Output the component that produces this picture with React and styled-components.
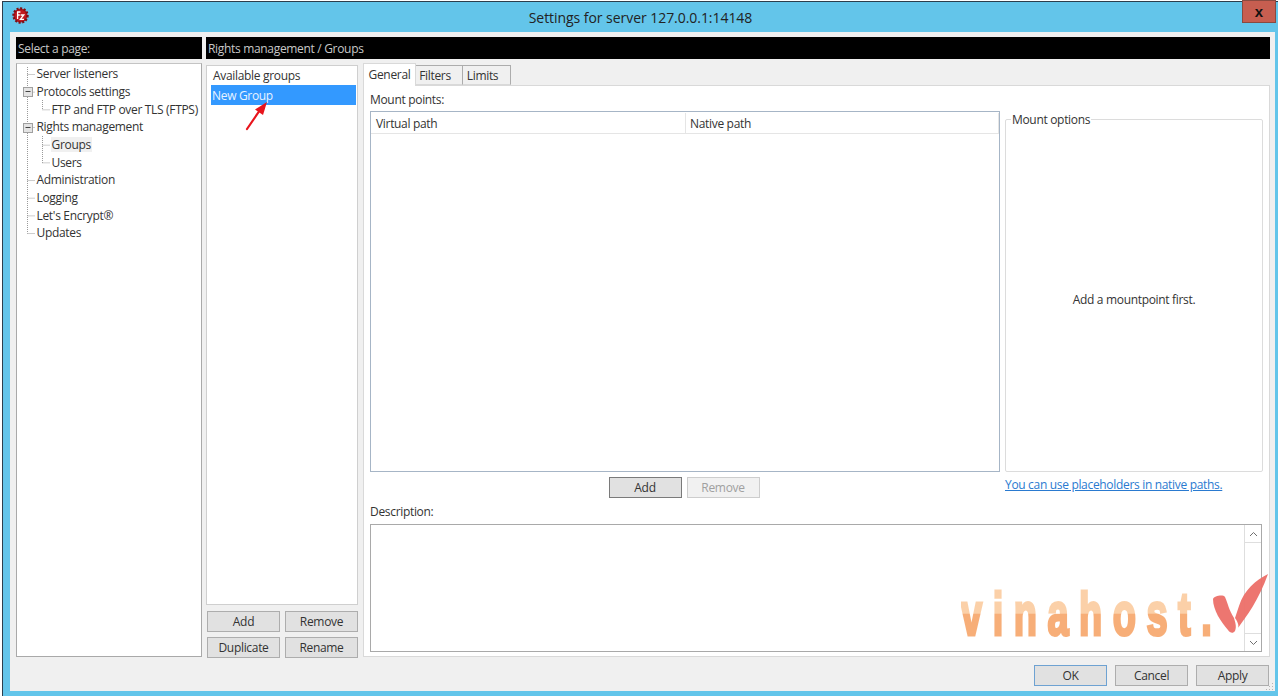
//Libs
import React from "react";
import styled, { createGlobalStyle } from "styled-components";

const GlobalStyle = createGlobalStyle`
  html, body {
    margin: 0;
    padding: 0;
    background: #fff;
    overflow: hidden;
  }
  * {
    box-sizing: border-box;
  }
`;

const Window = styled.div`
  width: 1276px;
  height: 695px;
  margin: 1px 0 0 2px;
  border-left: 1px solid #2c3e4c;
  border-top: 1px solid #2c3e4c;
  background-color: #63c5ea;
  display: flex;
  flex-direction: column;
  font-family: "Open Sans", "Noto Sans", sans-serif;
  font-size: 12px;
  letter-spacing: -0.32px;
  color: #333;
  position: relative;
`;

const TitleBar = styled.div`
  height: 30px;
  flex: none;
  display: flex;
  align-items: center;
  justify-content: center;
  font-size: 14px;
  letter-spacing: -0.05px;
  color: #222;
  position: relative;
`;

const AppIcon = styled.svg`
  position: absolute;
  left: 9px;
  top: 5px;
  width: 17px;
  height: 17px;
`;

const CloseButton = styled.div`
  position: absolute;
  right: 2px;
  top: -2px;
  width: 34px;
  height: 23px;
  background-color: #c75e50;
  border: 1px solid #8a4a40;
  display: flex;
  align-items: center;
  justify-content: center;
  font-family: "Liberation Sans", sans-serif;
  font-weight: bold;
  font-size: 15px;
  color: #111;
`;

const Client = styled.div`
  flex: none;
  width: 1265px;
  height: 659px;
  margin-left: 7px;
  background-color: #f0f0f0;
  padding: 5px 5px 0 6px;
  display: flex;
  flex-direction: column;
`;

const HeaderRow = styled.div`
  display: flex;
  gap: 4px;
  height: 22px;
  flex: none;
`;

const HeaderBar = styled.div`
  background-color: #000;
  color: #c8c8c8;
  display: flex;
  align-items: center;
  padding-left: 2px;
  width: ${(p) => (p.$wide ? "1064px" : "186px")};
`;

const Body = styled.div`
  display: flex;
  height: 594px;
  margin-top: 4px;
  flex: none;
`;

const TreePanel = styled.div`
  width: 186px;
  flex: none;
  background: #fff;
  border: 1px solid #a9a9a9;
  border-top-color: #c4c4c4;
  padding-top: 1px;
  display: grid;
  grid-auto-rows: 17.67px;
  align-content: start;
  position: relative;
`;

const TreeRow = styled.div`
  display: flex;
  align-items: center;
  padding-left: ${(p) => (p.$level === 2 ? "33.5px" : "18.5px")};
  white-space: nowrap;
`;

const TreeLabel = styled.span`
  padding: 0 1px;
  line-height: 15px;
  background: ${(p) => (p.$active ? "#f0f0f0" : "transparent")};
`;

const TreeLines = styled.svg`
  position: absolute;
  left: -1px;
  top: -1px;
  width: 60px;
  height: 190px;
`;

const GroupsColumn = styled.div`
  width: 152px;
  flex: none;
  margin-left: 4px;
  display: flex;
  flex-direction: column;
`;

const GroupList = styled.div`
  height: 540px;
  flex: none;
  margin-top: 2px;
  background: #fff;
  border: 1px solid #cfcfcf;
  padding: 0 1px 0 4px;
  position: relative;
`;

const GroupHeader = styled.div`
  height: 19px;
  display: flex;
  align-items: center;
  padding-left: 2px;
`;

const GroupItem = styled.div`
  height: 20px;
  display: flex;
  align-items: center;
  padding-left: 1px;
  background-color: #3399ff;
  color: #e8f3ff;
`;

const RedArrow = styled.svg`
  position: absolute;
  left: 36px;
  top: 34px;
  width: 28px;
  height: 32px;
`;

const ButtonGrid = styled.div`
  display: grid;
  grid-template-columns: 73px 73px;
  grid-auto-rows: 21px;
  column-gap: 5px;
  row-gap: 5px;
  margin: 6px 0 0 1px;
`;

const Button = styled.div`
  width: 73px;
  height: 21px;
  display: flex;
  align-items: center;
  justify-content: center;
  background-color: ${(p) => (p.$disabled ? "#f1f1f1" : "#e1e1e1")};
  color: ${(p) => (p.$disabled ? "#a0a0a0" : "#333")};
  border: 1px solid
    ${(p) => (p.$default ? "#6ea2d2" : p.$dark ? "#7a7a7a" : p.$disabled ? "#cdcdcd" : "#adadad")};
`;

const TabArea = styled.div`
  flex: 1;
  margin-left: 5px;
  display: flex;
  flex-direction: column;
  min-width: 0;
`;

const TabStrip = styled.div`
  height: 22px;
  flex: none;
  display: flex;
  align-items: flex-end;
  position: relative;
  z-index: 1;
`;

const Tab = styled.div`
  height: ${(p) => (p.$active ? "23px" : "20px")};
  width: ${(p) => p.$width};
  margin-bottom: ${(p) => (p.$active ? "-1px" : "0")};
  background: ${(p) => (p.$active ? "#fff" : "#f0f0f0")};
  border: 1px solid ${(p) => (p.$active ? "#d9d9d9" : "#acacac")};
  border-bottom: ${(p) => (p.$active ? "none" : "1px solid #d9d9d9")};
  border-left: ${(p) => (p.$active ? "" : "none")};
  display: flex;
  align-items: center;
  justify-content: center;
  padding-bottom: ${(p) => (p.$active ? "2px" : "0")};
  padding-right: ${(p) => (p.$active ? "0" : "8px")};
`;

const TabPanel = styled.div`
  flex: 1;
  background: #fff;
  border: 1px solid #d9d9d9;
  padding: 5px 6px 4px 6px;
  display: flex;
  flex-direction: column;
`;

const FieldLabel = styled.div`
  height: 16px;
  flex: none;
  display: flex;
  align-items: center;
`;

const MountRow = styled.div`
  display: flex;
  height: 361px;
  margin-top: 4px;
  flex: none;
  gap: 5px;
`;

const MountTable = styled.div`
  width: 630px;
  flex: none;
  border: 1px solid #a6b5c6;
  padding: 1px 0 0;
`;

const TableHead = styled.div`
  height: 21px;
  display: flex;
  border-bottom: 1px solid #e5e5e5;
`;

const HeadCell = styled.div`
  display: flex;
  align-items: center;
  padding-left: ${(p) => (p.$width ? "5px" : "4px")};
  border-right: 1px solid #e5e5e5;
  width: ${(p) => p.$width};
  flex: ${(p) => (p.$width ? "none" : "1")};
`;

const OptionsBox = styled.fieldset`
  margin: 0;
  flex: none;
  width: 258px;
  padding: 0;
  border: 1px solid #dcdcdc;
  border-radius: 2px;
  display: flex;
  align-items: center;
  justify-content: center;
`;

const OptionsLegend = styled.legend`
  margin-left: 5px;
  padding: 0 1px;
  line-height: 17px;
`;

const ActionRow = styled.div`
  display: flex;
  height: 21px;
  margin-top: 5px;
  flex: none;
`;

const ActionButtons = styled.div`
  width: 630px;
  flex: none;
  display: flex;
  justify-content: center;
  gap: 5px;
  padding-right: 2px;
`;

const HelpLink = styled.a`
  margin: 0 0 0 5px;
  color: #2a7ad0;
  text-decoration: underline;
  line-height: 16px;
`;

const Description = styled(FieldLabel)`
  margin-top: 5px;
`;

const DescriptionBox = styled.div`
  height: 128px;
  width: 892px;
  margin-top: 5px;
  flex: none;
  background: #fff;
  border: 1px solid #a9a9a9;
  display: flex;
  justify-content: flex-end;
  position: relative;
`;

const ScrollBar = styled.div`
  width: 17px;
  border-left: 1px solid #dedede;
  display: flex;
  flex-direction: column;
  justify-content: space-between;
`;

const ScrollArrow = styled.div`
  height: 18px;
  display: flex;
  align-items: center;
  justify-content: center;
  border-top: ${(p) => (p.$down ? "1px solid #dedede" : "none")};
  border-bottom: ${(p) => (p.$down ? "none" : "1px solid #dedede")};
`;

const Watermark = styled.div`
  position: absolute;
  left: 590px;
  top: 47px;
  width: 310px;
  height: 64px;
  pointer-events: none;
`;

const WatermarkText = styled.span`
  position: absolute;
  left: 0;
  bottom: -5px;
  font-family: "Liberation Sans", sans-serif;
  font-weight: bold;
  font-size: 38px;
  line-height: 38px;
  letter-spacing: 10.5px;
  white-space: nowrap;
  transform: scaleY(1.6);
  transform-origin: left 32px;
  background: linear-gradient(#fbd0a8 0 50%, #f7ae78 50% 100%);
  -webkit-background-clip: text;
  background-clip: text;
  color: transparent;
  -webkit-text-stroke: 2px transparent;
`;

const CheckMark = styled.svg`
  position: absolute;
  right: 0;
  top: 0;
  width: 60px;
  height: 64px;
`;

const Footer = styled.div`
  flex: 1;
  display: flex;
  justify-content: flex-end;
  align-items: flex-start;
  gap: 8px;
  padding: 8px 1px 0 0;
  position: relative;
`;

const Grip = styled.svg`
  position: absolute;
  right: -4px;
  bottom: 0;
  width: 10px;
  height: 10px;
`;

const treeItems = [
  { label: "Server listeners", level: 1 },
  { label: "Protocols settings", level: 1 },
  { label: "FTP and FTP over TLS (FTPS)", level: 2 },
  { label: "Rights management", level: 1 },
  { label: "Groups", level: 2, active: true },
  { label: "Users", level: 2 },
  { label: "Administration", level: 1 },
  { label: "Logging", level: 1 },
  { label: "Let's Encrypt®", level: 1 },
  { label: "Updates", level: 1 },
];

// centre of each tree row, measured from the panel's corner
const rowY = (i) => 11.5 + i * 17.67;

function Lines() {
  const dash = { stroke: "#9a9a9a", strokeWidth: 1, strokeDasharray: "1 1" };
  return (
    <TreeLines viewBox="0 0 60 190">
      <line x1="11.5" y1="4" x2="11.5" y2={rowY(9)} style={dash} />
      <line x1="26.5" y1="37" x2="26.5" y2={rowY(2)} style={dash} />
      <line x1="26.5" y1="73" x2="26.5" y2={rowY(5)} style={dash} />
      {treeItems.map((item, i) =>
        item.level === 1 ? (
          <line key={i} x1="11.5" y1={rowY(i)} x2="19" y2={rowY(i)} style={dash} />
        ) : (
          <line key={i} x1="26.5" y1={rowY(i)} x2="34" y2={rowY(i)} style={dash} />
        )
      )}
      {[1, 3].map((i) => (
        <g key={i}>
          <rect x="7.5" y={Math.round(rowY(i)) - 4.5} width="9" height="9" fill="#e4e4e4" stroke="#a0a0a0" />
          <line x1="9.5" x2="14.5" y1={Math.round(rowY(i)) - 0.5} y2={Math.round(rowY(i)) - 0.5} stroke="#444" />
        </g>
      ))}
    </TreeLines>
  );
}

export default function App() {
  return (
    <>
      <GlobalStyle />
      <Window>
        <TitleBar>
          <AppIcon viewBox="0 0 17 17">
            <circle cx="8.5" cy="8.5" r="7" fill="#b3141c" stroke="#7c1016" strokeWidth="2.4" strokeDasharray="2 1.6" />
            <circle cx="8.5" cy="8.5" r="5.6" fill="#bf1a20" />
            <path d="M5 5h3.4M5.6 5v7M5.6 8h2.2M8.6 8h3.2L8.4 12.4h3.6" fill="none" stroke="#fff" strokeWidth="1.3" />
          </AppIcon>
          Settings for server 127.0.0.1:14148
          <CloseButton>x</CloseButton>
        </TitleBar>

        <Client>
          <HeaderRow>
            <HeaderBar>Select a page:</HeaderBar>
            <HeaderBar $wide>Rights management / Groups</HeaderBar>
          </HeaderRow>

          <Body>
            <TreePanel>
              <Lines />
              {treeItems.map((item) => (
                <TreeRow key={item.label} $level={item.level}>
                  <TreeLabel $active={item.active}>{item.label}</TreeLabel>
                </TreeRow>
              ))}
            </TreePanel>

            <GroupsColumn>
              <GroupList>
                <GroupHeader>Available groups</GroupHeader>
                <GroupItem>New Group</GroupItem>
                <RedArrow viewBox="0 0 28 32">
                  <path d="M4 29L17 10" stroke="#e8141c" strokeWidth="2.2" strokeLinecap="round" />
                  <path d="M24 2L12 9.5L20 15Z" fill="#e8141c" />
                </RedArrow>
              </GroupList>
              <ButtonGrid>
                <Button>Add</Button>
                <Button>Remove</Button>
                <Button>Duplicate</Button>
                <Button>Rename</Button>
              </ButtonGrid>
            </GroupsColumn>

            <TabArea>
              <TabStrip>
                <Tab $active $width="53px">General</Tab>
                <Tab $width="47px">Filters</Tab>
                <Tab $width="48px">Limits</Tab>
              </TabStrip>
              <TabPanel>
                <FieldLabel>Mount points:</FieldLabel>
                <MountRow>
                  <MountTable>
                    <TableHead>
                      <HeadCell $width="315px">Virtual path</HeadCell>
                      <HeadCell>Native path</HeadCell>
                    </TableHead>
                  </MountTable>
                  <OptionsBox>
                    <OptionsLegend>Mount options</OptionsLegend>
                    Add a mountpoint first.
                  </OptionsBox>
                </MountRow>
                <ActionRow>
                  <ActionButtons>
                    <Button $dark>Add</Button>
                    <Button $disabled>Remove</Button>
                  </ActionButtons>
                  <HelpLink href="#">You can use placeholders in native paths.</HelpLink>
                </ActionRow>
                <Description>Description:</Description>
                <DescriptionBox>
                  <ScrollBar>
                    <ScrollArrow>
                      <svg width="9" height="6" viewBox="0 0 9 6">
                        <path d="M1 5L4.5 1.5L8 5" fill="none" stroke="#707070" />
                      </svg>
                    </ScrollArrow>
                    <ScrollArrow $down>
                      <svg width="9" height="6" viewBox="0 0 9 6">
                        <path d="M1 1L4.5 4.5L8 1" fill="none" stroke="#707070" />
                      </svg>
                    </ScrollArrow>
                  </ScrollBar>
                  <Watermark>
                    <WatermarkText>vinahost.</WatermarkText>
                    <CheckMark viewBox="0 0 60 64">
                      <path d="M2 27C3 24 12 22 14 25C17 32 18 38 23 46C24 50 26 54 24 59C22 62 19 61 17 58C10 50 2 38 2 27Z" fill="#ec6f68" fillOpacity="0.95" />
                      <path d="M57 2C45 8 33 18 28 34L24 46C27 50 28 54 27 56C35 45 48 28 57 2Z" fill="#ec6f68" fillOpacity="0.95" />
                    </CheckMark>
                  </Watermark>
                </DescriptionBox>
              </TabPanel>
            </TabArea>
          </Body>

          <Footer>
            <Button $default>OK</Button>
            <Button>Cancel</Button>
            <Button>Apply</Button>
            <Grip viewBox="0 0 10 10">
              <path d="M8 2h1v1H8zM5 5h1v1H5zM8 5h1v1H8zM2 8h1v1H2zM5 8h1v1H5zM8 8h1v1H8z" fill="#b5b5b5" />
            </Grip>
          </Footer>
        </Client>
      </Window>
    </>
  );
}
